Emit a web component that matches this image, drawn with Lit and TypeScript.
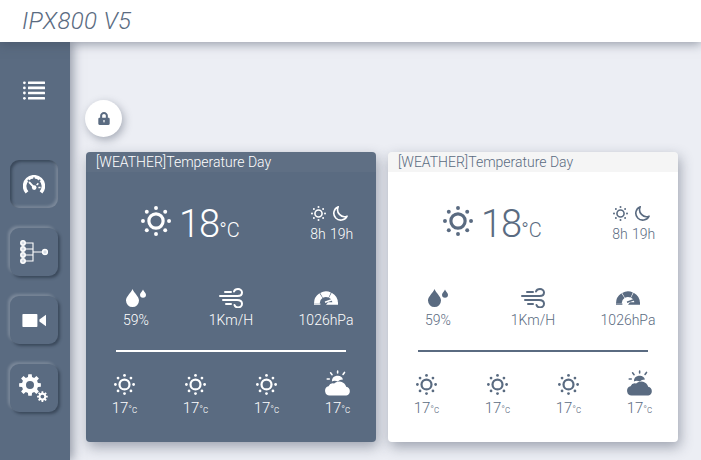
import { LitElement, html, css, svg } from "lit";
import { customElement, property } from "lit/decorators.js";

const dots = Array.from({ length: 8 }, (_, i) => {
  const a = (i * Math.PI) / 4;
  return [16 + 13.9 * Math.cos(a), 16 + 13.9 * Math.sin(a)];
});

const sunIcon = () => html`<svg class="i" viewBox="0 0 32 32">
  <circle cx="16" cy="16" r="7.6" fill="none" stroke="currentColor" stroke-width="3.4"></circle>
  ${dots.map(([x, y]) => svg`<circle cx=${x} cy=${y} r="2.1" fill="currentColor"></circle>`)}
</svg>`;

const moonIcon = () => html`<svg class="i moon" viewBox="0 0 16 16">
  <path d="M5.6 0.8 A7.4 7.4 0 1 0 15 10.8 A7.4 7.4 0 0 1 5.6 0.8 Z" fill="none" stroke="currentColor" stroke-width="1.7" stroke-linejoin="round"></path>
</svg>`;

const dropIcon = () => html`<svg class="i" viewBox="0 0 24 20">
  <path d="M8.5 1 C10 5 15 8.5 15 12.6 A6.5 6.5 0 0 1 2 12.6 C2 8.5 7 5 8.5 1 Z" fill="currentColor"></path>
  <path d="M19 1.5 C19.8 3.5 22 5 22 6.7 A3 3 0 0 1 16 6.7 C16 5 18.2 3.5 19 1.5 Z" fill="currentColor"></path>
</svg>`;

const windIcon = () => html`<svg class="i" viewBox="0 0 24 20" fill="none" stroke="currentColor" stroke-width="2" stroke-linecap="round">
  <path d="M6 4 H12"></path>
  <path d="M1 8 H18.5 C21.5 8 23 6.3 23 4.5 C23 2.5 21 1 19 1 C17 1 15.5 2 15 3.5"></path>
  <path d="M4 12 H18 C21 12 23 13.5 23 15.8 C23 18 21 19.4 19 19.4 C17.5 19.4 16 18.6 15.5 17"></path>
  <path d="M7 16 H12"></path>
</svg>`;

const arc = (a0: number, a1: number, r: number) => {
  const p = (a: number) => {
    const t = (a * Math.PI) / 180;
    return `${(12 + r * Math.cos(t)).toFixed(2)} ${(17 - r * Math.sin(t)).toFixed(2)}`;
  };
  return `M${p(a0)} A${r} ${r} 0 0 1 ${p(a1)}`;
};

const pressureIcon = () => html`<svg class="i" viewBox="0 1.6 24 20" fill="none" stroke="currentColor">
  <g stroke-width="5.6">
    <path d=${arc(180, 123, 9.2)}></path>
    <path d=${arc(119, 66, 9.2)}></path>
    <path d=${arc(62, 0, 9.2)}></path>
  </g>
  <path d="M11 15.8 L20 12.6" stroke-width="1.5"></path>
  <path d="M14 15.8 H24 V18.4 H12 Z M0 17 H6.4 V18.4 H0 Z" fill="currentColor" stroke="none"></path>
</svg>`;

const cloudSunIcon = () => html`<svg class="i" viewBox="0 0 28 28">
  <path d="M7.4 12.4 A6.2 6.2 0 0 1 19.4 10.2 A8 8 0 0 0 13.6 12.4 A6 6 0 0 0 7.4 12.4 Z" fill="currentColor"></path>
  <g stroke="currentColor" stroke-width="1.7" stroke-linecap="round">
    <path d="M13.6 1 V3.2 M6 3 L7.6 5 M21 2.6 L19.4 4.8 M2.4 9.6 H4.6"></path>
  </g>
  <path d="M5.6 27.4 A5 5 0 0 1 3.8 17.6 A5.2 5.2 0 0 1 9.8 14.6 A7.8 7.8 0 0 1 22.8 18 A4.8 4.8 0 0 1 23 27.4 Z" fill="currentColor"></path>
</svg>`;

const gearPath = (cx: number, cy: number, ro: number, ri: number, hole: number, teeth: number) => {
  const pts: string[] = [];
  const step = (2 * Math.PI) / teeth;
  for (let t = 0; t < teeth; t++) {
    const a = t * step - Math.PI / 2;
    const w = step * 0.2;
    const p = [
      [ri, a - step * 0.32],
      [ro, a - w],
      [ro, a + w],
      [ri, a + step * 0.32],
    ];
    p.forEach(([r, b]) => pts.push(`${(cx + r * Math.cos(b)).toFixed(2)} ${(cy + r * Math.sin(b)).toFixed(2)}`));
  }
  return `M${pts.join("L")}Z M${cx - hole} ${cy} a${hole} ${hole} 0 1 0 ${2 * hole} 0 a${hole} ${hole} 0 1 0 ${-2 * hole} 0 Z`;
};

const navGauge = html`<svg class="nav-i gauge" viewBox="0 0 22 19">
  <path d="M4 17.4 A9.4 9.4 0 1 1 18 17.4" fill="none" stroke="white" stroke-width="3.6"></path>
  <path d="M11 12.4 L6.6 7.6" stroke="white" stroke-width="2" stroke-linecap="round"></path>
  <circle cx="11.2" cy="12.6" r="2.3" fill="white"></circle>
  <path d="M15.4 8.4 L13.6 10 M17.6 12.6 H15.4" stroke="white" stroke-width="1.5"></path>
  <g fill="#5a6b81"><circle cx="11" cy="3.2" r="0.9"></circle><circle cx="5.4" cy="5.4" r="0.9"></circle><circle cx="16.6" cy="5.4" r="0.9"></circle></g>
</svg>`;

const navTree = html`<svg class="nav-i tree" viewBox="0 0 28 24">
  <g fill="none" stroke="white" stroke-width="1.1">
    <path d="M3 3 H13 V21 H3 M3 9 H13 M3 15 H13 M13 12 H23"></path>
  </g>
  <g fill="#d5dbe3" stroke="white" stroke-width="1.5">
    <circle cx="3" cy="3" r="2.2"></circle>
    <circle cx="3" cy="9" r="2.2"></circle>
    <circle cx="3" cy="15" r="2.2"></circle>
    <circle cx="3" cy="21" r="2.2"></circle>
    <circle cx="25" cy="12" r="2.4"></circle>
  </g>
</svg>`;

const navVideo = html`<svg class="nav-i video" viewBox="0 0 25 17">
  <rect x="0.4" y="2" width="15" height="13" rx="0.8" fill="white"></rect>
  <path d="M17.4 7.4 L24 2.8 V14.2 L17.4 9.6 Z" fill="white"></path>
</svg>`;

const navGears = html`<svg class="nav-i gears" viewBox="0 0 30 29">
  <path fill="white" fill-rule="evenodd" d=${gearPath(11, 11, 11, 8.2, 4, 8)}></path>
  <path fill="white" fill-rule="evenodd" d=${gearPath(23.4, 22.6, 5.4, 3.9, 1.9, 8)}></path>
</svg>`;

const rows = [0.5, 5.6, 10.7, 16];
const listIcon = html`<svg class="list" viewBox="0 0 22 19" fill="white">
  ${rows.map(
    (y) => svg`<circle cx="1.4" cy=${y + 1.3} r="1.4"></circle><rect x="5" y=${y} width="17" height="2.6" rx=".5"></rect>`
  )}
</svg>`;

@customElement("weather-card")
class WeatherCard extends LitElement {
  @property({ type: Boolean, reflect: true }) dark = false;

  static styles = css`
    :host {
      display: block;
      width: 290px;
      height: 290px;
      border-radius: 4px;
      background: #fff;
      color: #5a6b81;
      box-shadow: 2px 5px 13px rgba(50, 60, 80, 0.42);
      font-family: Roboto, sans-serif;
      font-weight: 300;
      overflow: hidden;
    }
    :host([dark]) {
      background: #5a6b81;
      color: #fff;
    }
    .hdr {
      height: 20px;
      line-height: 20px;
      padding-left: 10px;
      font-size: 14px;
      background: rgba(0, 0, 0, 0.04);
    }
    :host([dark]) .hdr {
      background: rgba(255, 255, 255, 0.03);
    }
    .i {
      display: block;
    }
    .now {
      display: flex;
      height: 68px;
      margin-top: 28px;
      padding-left: 55px;
    }
    .main {
      display: flex;
      align-items: flex-start;
      width: 165px;
      padding-top: 6px;
    }
    .main .i {
      width: 30px;
      height: 30px;
      margin-right: 8px;
    }
    .reading {
      display: flex;
      align-items: baseline;
      margin-top: -6px;
      line-height: 48px;
    }
    .temp {
      font-size: 38px;
      letter-spacing: -1px;
    }
    .unit {
      font-size: 20px;
    }
    .range {
      display: grid;
      grid-template-columns: 24px 23px;
      margin-top: 6px;
      justify-items: center;
      text-align: center;
      font-size: 14px;
      line-height: 18px;
      align-content: start;
    }
    .range .i {
      width: 15px;
      height: 15px;
      margin-bottom: 4px;
    }
    .range .moon {
      margin-right: 3px;
    }
    .metrics {
      display: grid;
      grid-template-columns: repeat(3, 95px);
      justify-content: center;
      justify-items: center;
      margin-top: 20px;
      font-size: 14px;
      line-height: 18px;
    }
    .metrics .m {
      display: flex;
      flex-direction: column;
      align-items: center;
    }
    .metrics .i {
      width: 24px;
      height: 20px;
      margin-bottom: 3px;
    }
    .rule {
      width: 230px;
      height: 2px;
      margin: 21px auto 0;
      background: currentColor;
    }
    .fc {
      display: grid;
      grid-template-columns: repeat(4, 71px);
      justify-content: center;
      justify-items: center;
      margin-top: 20px;
    }
    .fc .d {
      display: flex;
      flex-direction: column;
      align-items: center;
      height: 47px;
      justify-content: flex-end;
    }
    .fc .i {
      width: 21px;
      height: 21px;
      margin-bottom: 4px;
    }
    .fc .big {
      width: 26px;
      height: 26px;
      margin-bottom: 3px;
    }
    .fc .big .i {
      width: 26px;
      height: 26px;
      margin: 0;
    }
    .fc .t {
      font-size: 15px;
      line-height: 18px;
    }
    .fc .t span {
      font-size: 10px;
    }
  `;

  render() {
    return html`
      <div class="hdr">[WEATHER]Temperature Day</div>
      <div class="now">
        <div class="main">
          ${sunIcon()}
          <div class="reading"><span class="temp">18</span><span class="unit">°C</span></div>
        </div>
        <div class="range">
          ${sunIcon()}${moonIcon()}
          <span>8h</span><span>19h</span>
        </div>
      </div>
      <div class="metrics">
        <div class="m">${dropIcon()}<span>59%</span></div>
        <div class="m">${windIcon()}<span>1Km/H</span></div>
        <div class="m">${pressureIcon()}<span>1026hPa</span></div>
      </div>
      <div class="rule"></div>
      <div class="fc">
        ${[0, 1, 2].map(() => html`<div class="d">${sunIcon()}<div class="t">17<span>°c</span></div></div>`)}
        <div class="d"><div class="big">${cloudSunIcon()}</div><div class="t">17<span>°c</span></div></div>
      </div>
    `;
  }
}

@customElement("app-root")
class AppRoot extends LitElement {
  static styles = css`
    :host {
      display: block;
      width: 701px;
      height: 460px;
      overflow: hidden;
      background: #eceef4;
      font-family: Roboto, sans-serif;
    }
    .top {
      position: relative;
      z-index: 2;
      height: 42px;
      background: #fff;
      box-shadow: 0 2px 10px rgba(60, 70, 90, 0.5);
      padding-left: 22px;
      line-height: 42px;
      font-size: 24px;
      letter-spacing: 0.35px;
      font-weight: 300;
      font-style: italic;
      color: #5a6b81;
    }
    .body {
      display: flex;
      height: 418px;
    }
    .side {
      position: relative;
      z-index: 1;
      width: 70px;
      flex: none;
      background: #5a6b81;
      box-shadow: 3px 0 10px rgba(60, 70, 90, 0.5);
      display: flex;
      flex-direction: column;
      align-items: center;
    }
    .list {
      display: block;
      width: 22px;
      height: 19px;
    }
    .menu {
      margin: 39px 2px 60px 0;
      height: 19px;
    }
    .btn {
      width: 48px;
      height: 48px;
      margin-bottom: 20px;
      margin-left: -2px;
      border-radius: 9px;
      display: flex;
      align-items: center;
      justify-content: center;
      box-shadow: -2px -2px 3px rgba(255, 255, 255, 0.2), 2px 2px 3px rgba(20, 30, 45, 0.45);
    }
    .btn.on {
      box-shadow: inset 2px 2px 3px rgba(20, 30, 45, 0.45), inset -2px -2px 3px rgba(255, 255, 255, 0.2);
    }
    .nav-i {
      display: block;
    }
    .gauge {
      width: 22px;
      height: 19px;
    }
    .tree {
      width: 28px;
      height: 24px;
    }
    .video {
      width: 25px;
      height: 17px;
    }
    .gears {
      width: 30px;
      height: 29px;
    }
    .main {
      flex: 1;
      padding: 58px 0 0 15px;
    }
    .lock {
      width: 37px;
      height: 37px;
      border-radius: 50%;
      background: #fff;
      box-shadow: 2px 3px 8px rgba(60, 70, 90, 0.4);
      display: flex;
      align-items: center;
      justify-content: center;
    }
    .lock svg {
      width: 12px;
      height: 13px;
      display: block;
    }
    .cards {
      display: flex;
      gap: 12px;
      margin: 15px 0 0 1px;
    }
  `;

  render() {
    return html`
      <div class="top">IPX800 V5</div>
      <div class="body">
        <nav class="side">
          <div class="menu">${listIcon}</div>
          <div class="btn on">${navGauge}</div>
          <div class="btn">${navTree}</div>
          <div class="btn">${navVideo}</div>
          <div class="btn">${navGears}</div>
        </nav>
        <main class="main">
          <div class="lock">
            <svg viewBox="0 0 448 512"><path fill="#5a6b81" fill-rule="evenodd" d="M400 224h-24v-72C376 68.2 307.8 0 224 0S72 68.2 72 152v72H48c-26.5 0-48 21.5-48 48v192c0 26.5 21.5 48 48 48h352c26.5 0 48-21.5 48-48V272c0-26.5-21.5-48-48-48zm-104 0H152v-72c0-39.7 32.3-72 72-72s72 32.3 72 72v72zM224 320a32 32 0 0 0-16 60v36h32v-36a32 32 0 0 0-16-60z"></path></svg>
          </div>
          <div class="cards">
            <weather-card dark></weather-card>
            <weather-card></weather-card>
          </div>
        </main>
      </div>
    `;
  }
}
